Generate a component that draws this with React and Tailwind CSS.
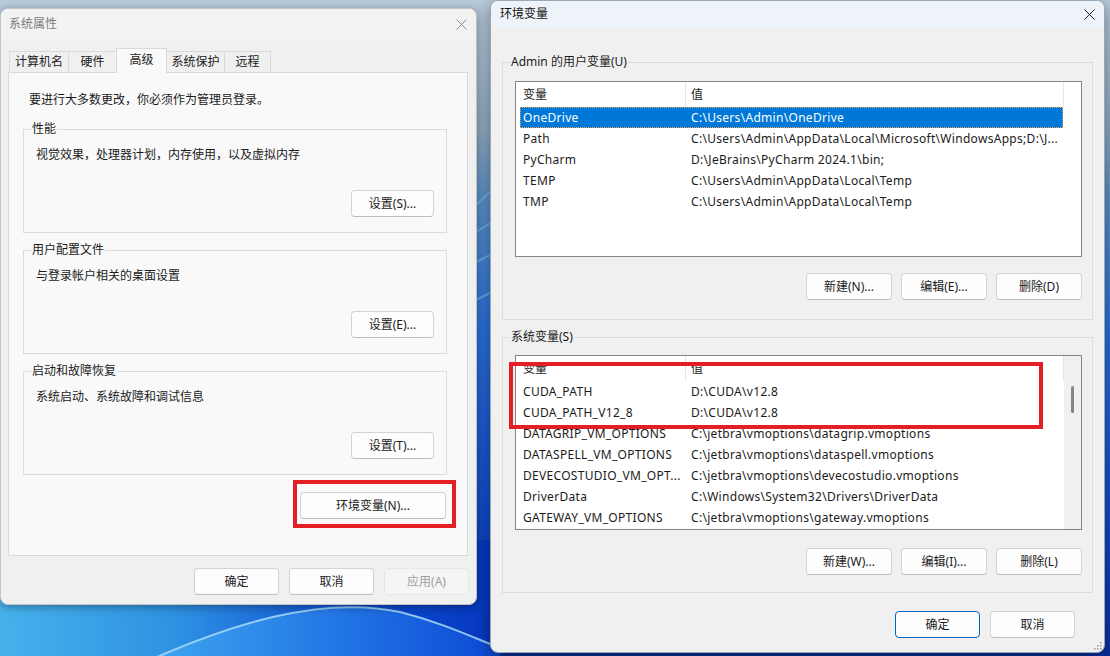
import clsx from 'clsx'

const userVars = [
    ['OneDrive', 'C:\\Users\\Admin\\OneDrive'],
    ['Path', 'C:\\Users\\Admin\\AppData\\Local\\Microsoft\\WindowsApps;D:\\J...'],
    ['PyCharm', 'D:\\JeBrains\\PyCharm 2024.1\\bin;'],
    ['TEMP', 'C:\\Users\\Admin\\AppData\\Local\\Temp'],
    ['TMP', 'C:\\Users\\Admin\\AppData\\Local\\Temp'],
]

const systemVars = [
    ['CUDA_PATH', 'D:\\CUDA\\v12.8'],
    ['CUDA_PATH_V12_8', 'D:\\CUDA\\v12.8'],
    ['DATAGRIP_VM_OPTIONS', 'C:\\jetbra\\vmoptions\\datagrip.vmoptions'],
    ['DATASPELL_VM_OPTIONS', 'C:\\jetbra\\vmoptions\\dataspell.vmoptions'],
    ['DEVECOSTUDIO_VM_OPT...', 'C:\\jetbra\\vmoptions\\devecostudio.vmoptions'],
    ['DriverData', 'C:\\Windows\\System32\\Drivers\\DriverData'],
    ['GATEWAY_VM_OPTIONS', 'C:\\jetbra\\vmoptions\\gateway.vmoptions'],
]

function CloseIcon({ color }) {
    return (
        <svg width="11" height="11" viewBox="0 0 11 11">
            <path d="M0.5 0.5L10.5 10.5M10.5 0.5L0.5 10.5" stroke={color} strokeWidth="1" />
        </svg>
    )
}

function WinButton({ children, className, disabled = false, isDefault = false }) {
    return (
        <button
            className={clsx(
                'h-[27px] rounded-[4px] border text-[12px] leading-[16px] flex items-center justify-center',
                disabled && 'bg-[#f5f5f5] border-[#e6e6e6] text-[#9f9f9f]',
                !disabled && 'bg-[#fdfdfd] text-[#1b1b1b]',
                !disabled && isDefault && 'border-[#0067c0]',
                !disabled && !isDefault && 'border-[#d3d3d3] border-b-[#bdbdbd]',
                className
            )}
        >
            {children}
        </button>
    )
}

function Group({ label, className, children }) {
    return (
        <fieldset className={clsx('border border-[#dcdcdc]', className)}>
            <legend className="ml-[7px] px-[1px] text-[12px] leading-[16px] text-[#1b1b1b]">{label}</legend>
            {children}
        </fieldset>
    )
}

function Wallpaper() {
    return (
        <svg className="absolute inset-0" width="1110" height="656" viewBox="0 0 1110 656">
            <defs>
                <linearGradient id="sky" x1="0" y1="0" x2="0" y2="1">
                    <stop offset="0" stopColor="#b8cbdb" />
                    <stop offset="0.2" stopColor="#8faac1" />
                    <stop offset="0.3" stopColor="#5b90c6" />
                    <stop offset="0.5" stopColor="#2a6fd9" />
                    <stop offset="0.8" stopColor="#1048c6" />
                    <stop offset="1" stopColor="#0a2f9e" />
                </linearGradient>
                <linearGradient id="low" x1="0" y1="0" x2="1" y2="0">
                    <stop offset="0" stopColor="#46b2ec" />
                    <stop offset="0.35" stopColor="#2e92e2" />
                    <stop offset="0.7" stopColor="#0d4dd2" />
                    <stop offset="1" stopColor="#0637c0" />
                </linearGradient>
                <linearGradient id="wave" x1="0" y1="0" x2="1" y2="0">
                    <stop offset="0" stopColor="#3fa6ee" />
                    <stop offset="0.6" stopColor="#1f70e4" />
                    <stop offset="1" stopColor="#0c48d4" />
                </linearGradient>
            </defs>
            <rect width="1110" height="656" fill="url(#sky)" />
            <rect x="0" y="540" width="500" height="116" fill="url(#low)" />
            <path d="M150 660 C 230 625, 320 595, 400 612 C 440 622, 470 636, 500 648 L 500 660 Z" fill="url(#wave)" />
            <path d="M150 660 C 230 625, 320 595, 400 612 C 440 622, 470 636, 500 648" stroke="#a6dbf8" strokeWidth="2" fill="none" opacity="0.85" />
            <path d="M476 205 L 492 190 M476 232 L 492 222 M476 262 L 492 254 M476 300 L 492 292" stroke="#7fc0f0" strokeWidth="2" opacity="0.6" />
        </svg>
    )
}

function Tab({ label, active, className }) {
    return (
        <div
            className={clsx(
                'flex justify-center border border-b-0 border-[#d9d9d9] text-[12px] leading-[16px] text-[#1b1b1b]',
                active ? 'relative z-10 h-[25px] -mb-px bg-[#f9f9f9] pt-[3px]' : 'h-[21px] bg-[#f0f0f0] pt-[2px]',
                className
            )}
        >
            {label}
        </div>
    )
}

function SettingsGroup({ label, desc, button, className }) {
    return (
        <Group label={label} className={clsx('ml-[14px] w-[424px] h-[112px]', className)}>
            <div className="flex flex-col">
                <p className="mt-[10px] pl-[12px]">{desc}</p>
                <WinButton className="mt-[27px] self-end mr-[12px] w-[83px]">{button}</WinButton>
            </div>
        </Group>
    )
}

function SystemProperties() {
    return (
        <div className="absolute left-0 top-[8px] w-[477px] h-[597px] rounded-[8px] bg-[#f0f0f0] border border-[#c4c4c4] shadow-[0_2px_10px_rgba(0,0,0,0.35)] overflow-hidden">
            <div className="h-[30px] bg-[#f3f3f3] flex items-center justify-between pl-[8px] pr-[9px]">
                <span className="text-[12px] text-[#7b7b7b]">系统属性</span>
                <CloseIcon color="#8c8c8c" />
            </div>
            <div className="pt-[9px] pl-[7px] pr-[7px]">
                <div className="flex items-end h-[24px] pl-[1px]">
                    <Tab label="计算机名" className="w-[60px]" />
                    <Tab label="硬件" className="w-[49px] -ml-px" />
                    <Tab label="高级" active className="w-[51px] -ml-px" />
                    <Tab label="系统保护" className="w-[59px] -ml-px" />
                    <Tab label="远程" className="w-[47px] -ml-px" />
                </div>
                <div className="w-[460px] h-[484px] border border-[#d9d9d9] bg-[#f9f9f9] pt-[19px] text-[12px] leading-[16px] text-[#1b1b1b]">
                    <p className="pl-[20px]">要进行大多数更改，你必须作为管理员登录。</p>
                    <SettingsGroup className="mt-[13px]" label="性能" desc="视觉效果，处理器计划，内存使用，以及虚拟内存" button="设置(S)..." />
                    <SettingsGroup className="mt-[9px]" label="用户配置文件" desc="与登录帐户相关的桌面设置" button="设置(E)..." />
                    <SettingsGroup className="mt-[9px]" label="启动和故障恢复" desc="系统启动、系统故障和调试信息" button="设置(T)..." />
                    <div className="flex justify-end mt-[17px] pr-[21px]">
                        <div className="relative">
                            <WinButton className="w-[146px]">环境变量(N)...</WinButton>
                            <div className="absolute -left-[7px] -top-[12px] w-[163px] h-[48px] border-4 border-[#e31e24]" />
                        </div>
                    </div>
                </div>
                <div className="flex justify-end gap-[10px] mt-[12px]">
                    <WinButton className="w-[85px]">确定</WinButton>
                    <WinButton className="w-[85px]">取消</WinButton>
                    <WinButton className="w-[85px]" disabled>应用(A)</WinButton>
                </div>
            </div>
        </div>
    )
}

function VarList({ rows, selected = -1, scroll = false, className }) {
    return (
        <div className={clsx('border border-[#868686] bg-white overflow-hidden flex text-[12px] leading-[16px] text-[#1b1b1b]', className)}>
            <div className="w-[548px]">
                <div className="h-[25px] flex">
                    <div className="w-[170px] border-r border-[#e5e5e5] pl-[7px] flex items-center">变量</div>
                    <div className="w-[378px] border-r border-[#e5e5e5] pl-[5px] flex items-center">值</div>
                </div>
                {rows.map(([name, value], i) => (
                    <div
                        key={name}
                        className={clsx(
                            'ml-[4px] w-[543px] h-[21px] flex items-center whitespace-nowrap tracking-[0.3px]',
                            i === selected ? 'bg-[#0078d7] text-white border border-dotted border-[#f0a050]' : 'border border-transparent'
                        )}
                    >
                        <div className="w-[164px] pl-[2px] overflow-hidden">{name}</div>
                        <div className="flex-1 pl-[6px] overflow-hidden">{value}</div>
                    </div>
                ))}
            </div>
            <div className={clsx('flex-1 flex flex-col', scroll && 'bg-[#f0f0f0]')}>
                {scroll && <div className="mt-[30px] ml-[7px] w-[3px] h-[27px] rounded-full bg-[#858585]" />}
            </div>
        </div>
    )
}

function ButtonRow({ labels, className }) {
    return (
        <div className={clsx('flex justify-end gap-[9px] mr-[10px]', className)}>
            {labels.map(l => (
                <WinButton key={l} className="w-[86px]">{l}</WinButton>
            ))}
        </div>
    )
}

function EnvironmentVariables() {
    return (
        <div className="absolute left-[490px] top-0 w-[615px] h-[653px] rounded-[8px] bg-[#f0f0f0] border border-[#9aa7b4] shadow-[0_4px_16px_rgba(0,0,0,0.4)] overflow-hidden">
            <div className="h-[26px] bg-[#eef3f9] flex items-center justify-between pl-[9px] pr-[9px]">
                <span className="text-[12px] text-[#111]">环境变量</span>
                <CloseIcon color="#222" />
            </div>
            <div className="px-[11px] pt-[27px]">
                <Group label="Admin 的用户变量(U)" className="h-[266px]">
                    <VarList rows={userVars} selected={0} className="mt-[11px] ml-[12px] w-[567px] h-[176px]" />
                    <ButtonRow className="mt-[16px]" labels={['新建(N)...', '编辑(E)...', '删除(D)']} />
                </Group>
                <Group label="系统变量(S)" className="h-[264px] mt-[9px]">
                    <div className="relative mt-[10px] ml-[12px] w-[567px]">
                        <VarList rows={systemVars} scroll className="w-[567px] h-[175px]" />
                        <div className="absolute -left-[6px] top-[7px] w-[534px] h-[67px] border-4 border-[#e31e24]" />
                    </div>
                    <ButtonRow className="mt-[18px]" labels={['新建(W)...', '编辑(I)...', '删除(L)']} />
                </Group>
                <div className="flex justify-end gap-[10px] mt-[18px] pr-[18px]">
                    <WinButton className="w-[85px]" isDefault>确定</WinButton>
                    <WinButton className="w-[85px]">取消</WinButton>
                </div>
            </div>
            <svg className="absolute right-[2px] bottom-[2px]" width="8" height="8" viewBox="0 0 8 8">
                <rect x="6" y="0" width="1.5" height="1.5" fill="#999" />
                <rect x="3" y="3" width="1.5" height="1.5" fill="#999" />
                <rect x="6" y="3" width="1.5" height="1.5" fill="#999" />
                <rect x="0" y="6" width="1.5" height="1.5" fill="#999" />
                <rect x="3" y="6" width="1.5" height="1.5" fill="#999" />
                <rect x="6" y="6" width="1.5" height="1.5" fill="#999" />
            </svg>
        </div>
    )
}

export default function App() {
    return (
        <div className="relative w-[1110px] h-[656px] overflow-hidden font-['Noto_Sans','Noto_Sans_CJK_SC',sans-serif] text-[12px]">
            <Wallpaper />
            <SystemProperties />
            <EnvironmentVariables />
        </div>
    )
}
